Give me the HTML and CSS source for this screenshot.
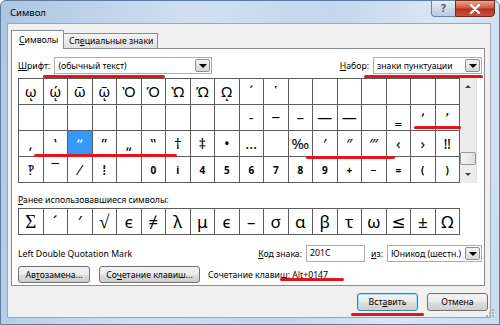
FILE: index.html
```html
<!DOCTYPE html>
<html lang="ru">
<head>
    <meta charset="UTF-8">
    <title>Символ</title>
    <link rel="stylesheet" href="styles.css">
</head>
<body>
    <div class="window">
        <div class="titlebar">
            <span class="title">Символ</span>
            <div class="caption-btns">
                <span class="cap-help">?</span>
                <span class="cap-close">
                    <svg width="12" height="10" viewBox="0 0 12 10"><path d="M2 1 L10 9 M10 1 L2 9" stroke="#fff" stroke-width="2.4" stroke-linecap="round"/></svg>
                </span>
            </div>
        </div>

        <div class="client">
            <div class="tabs">
                <span class="tab active"><u>С</u>имволы</span>
                <span class="tab">Сп<u>е</u>циальные знаки</span>
            </div>

            <div class="panel">
                <div class="font-row">
                    <label><u>Ш</u>рифт:</label>
                    <div class="combo font-combo"><span>(обычный текст)</span><span class="drop"></span></div>
                    <label class="set-label"><u>Н</u>абор:</label>
                    <div class="combo set-combo"><span>знаки пунктуации</span><span class="drop"></span></div>
                </div>

                <div class="grid-wrap">
                    <div class="grid chars">
                        <span>ῳ</span><span>ῴ</span><span>ῶ</span><span>ῷ</span><span>Ὸ</span><span>Ό</span><span>Ὼ</span><span>Ώ</span><span>ῼ</span><span>´</span><span>῾</span><span></span><span></span><span></span><span></span><span></span><span></span><span></span>
                        <span></span><span></span><span></span><span></span><span></span><span></span><span></span><span></span><span></span><span>‐</span><span>‒</span><span>–</span><span>—</span><span>―</span><span></span><span>‗</span><span>‘</span><span>’</span>
                        <span>‚</span><span>‛</span><span class="selected">“</span><span>”</span><span>„</span><span>‟</span><span>†</span><span>‡</span><span>•</span><span>…</span><span></span><span>‰</span><span>′</span><span>″</span><span>‴</span><span>‹</span><span>›</span><span>‼</span>
                        <span>‽</span><span>‾</span><span>⁄</span><span>⁞</span><span></span><span class="sup">0</span><span class="sup">i</span><span class="sup">4</span><span class="sup">5</span><span class="sup">6</span><span class="sup">7</span><span class="sup">8</span><span class="sup">9</span><span class="sup">+</span><span class="sup">−</span><span class="sup">=</span><span class="sup">(</span><span class="sup">)</span>
                    </div>
                    <div class="scrollbar">
                        <span class="sb-btn"><i class="arrow-up"></i></span>
                        <span class="sb-track"><span class="sb-thumb"></span></span>
                        <span class="sb-btn"><i class="arrow-down"></i></span>
                    </div>
                </div>

                <div class="recent-label"><u>Р</u>анее использовавшиеся символы:</div>
                <div class="grid recent">
                    <span class="serif">Σ</span><span>´</span><span>′</span><span class="serif">√</span><span>ϵ</span><span>≠</span><span>λ</span><span>μ</span><span>є</span><span>–</span><span>σ</span><span>α</span><span>β</span><span>τ</span><span>ω</span><span>≤</span><span>±</span><span>Ω</span>
                </div>

                <div class="info-row">
                    <span class="char-name">Left Double Quotation Mark</span>
                    <label><u>К</u>од знака:</label>
                    <div class="field">201C</div>
                    <label class="from-label"><u>и</u>з:</label>
                    <div class="combo from-combo"><span>Юникод (шестн.)</span><span class="drop"></span></div>
                </div>

                <div class="btn-row">
                    <button class="btn autocorrect">Ав<u>т</u>озамена...</button>
                    <button class="btn shortcut">Со<u>ч</u>етание клавиш...</button>
                    <span class="shortcut-text">Сочетание клавиш: Alt+0147</span>
                </div>
            </div>

            <div class="footer">
                <button class="btn default">Вст<u>а</u>вить</button>
                <button class="btn">Отмена</button>
            </div>
        </div>

        <svg class="grip" width="10" height="10" viewBox="0 0 10 10">
            <rect x="7" y="1" width="2" height="2" fill="#a7b4c4"/>
            <rect x="4" y="4" width="2" height="2" fill="#a7b4c4"/>
            <rect x="7" y="4" width="2" height="2" fill="#a7b4c4"/>
            <rect x="1" y="7" width="2" height="2" fill="#a7b4c4"/>
            <rect x="4" y="7" width="2" height="2" fill="#a7b4c4"/>
            <rect x="7" y="7" width="2" height="2" fill="#a7b4c4"/>
        </svg>

        <!-- red annotation strokes -->
        <span class="mark mark-font"></span>
        <span class="mark mark-set"></span>
        <span class="mark mark-quotes"></span>
        <span class="mark mark-single"></span>
        <span class="mark mark-primes"></span>
        <span class="mark mark-alt"></span>
        <span class="mark mark-insert"></span>
    </div>
</body>
</html>
```

FILE: styles.css
```css
* {
    margin: 0;
    padding: 0;
    box-sizing: border-box;
}

body {
    width: 500px;
    height: 325px;
    overflow: hidden;
    font-family: "Noto Sans", "DejaVu Sans", sans-serif;
    font-size: 8.7px;
    color: #000;
}

u {
    text-decoration: underline;
    text-underline-offset: 1px;
}

.window {
    position: relative;
    width: 500px;
    height: 325px;
    display: flex;
    flex-direction: column;
    border: 1px solid #5e7d9e;
    border-radius: 6px 6px 0 0;
    background: linear-gradient(100deg, #adc6e2 0%, #cfe0f2 35%, #c2d7ed 60%, #d8e7f6 80%, #c9dcf0 100%);
}

.titlebar {
    height: 22px;
    display: flex;
    justify-content: space-between;
    align-items: flex-start;
    padding-left: 9px;
}

.title {
    margin-top: 5px;
    font-size: 9.5px;
    color: #000;
}

.caption-btns {
    display: flex;
    margin-right: 4px;
    margin-top: -1px;
}

.cap-help {
    width: 24px;
    height: 17px;
    border: 1px solid #6a83a0;
    border-right: none;
    border-radius: 0 0 0 4px;
    background: linear-gradient(#e9f0f8, #cbdaea 50%, #b9cde3);
    color: #3d5572;
    font-size: 10px;
    font-weight: bold;
    text-align: center;
    line-height: 15px;
}

.cap-close {
    width: 40px;
    height: 17px;
    display: flex;
    align-items: center;
    justify-content: center;
    border: 1px solid #6e2b20;
    border-radius: 0 0 4px 0;
    background: linear-gradient(#e9a796, #d0583f 45%, #b8321b 55%, #c9523a);
}

.client {
    margin: 0 8px 0 6px;
    height: 295px;
    background: #f0f0f0;
    border: 1px solid #94a9c0;
    display: flex;
    flex-direction: column;
}

.tabs {
    display: flex;
    align-items: flex-end;
    height: 24px;
    padding-left: 3px;
}

.tab {
    width: 94px;
    height: 15px;
    padding: 0 0 0 5px;
    border: 1px solid #898c95;
    border-bottom: none;
    border-left: none;
    background: linear-gradient(#f3f3f3, #e1e1e1);
    line-height: 14px;
    white-space: nowrap;
}

.tab.active {
    width: 53px;
    height: 19px;
    margin-bottom: -1px;
    padding: 0 0 0 7px;
    border-left: 1px solid #898c95;
    background: #fff;
    line-height: 18px;
    position: relative;
}

.panel {
    margin: 0 5px 0 3px;
    height: 238px;
    border: 1px solid #898c95;
    background: #fff;
    padding: 8px 2px 0 6px;
}

.font-row {
    display: flex;
    align-items: center;
    height: 17px;
}

.combo {
    height: 17px;
    display: flex;
    align-items: center;
    justify-content: space-between;
    border: 1px solid #abadb3;
    background: #fff;
    padding: 0 1px 0 3px;
    white-space: nowrap;
}

.drop {
    width: 15px;
    height: 13px;
    border: 1px solid #8e8f8f;
    border-radius: 2px;
    background: linear-gradient(#f2f2f2, #d8d8d8);
    position: relative;
}

.drop::after {
    content: "";
    position: absolute;
    left: 3px;
    top: 4px;
    border-left: 4px solid transparent;
    border-right: 4px solid transparent;
    border-top: 4px solid #000;
}

.font-combo {
    width: 158px;
    margin-left: 4px;
}

.set-label {
    margin-left: auto;
    margin-right: 4px;
}

.set-combo {
    width: 109px;
}

.grid-wrap {
    display: flex;
    margin-top: 4px;
}

.grid {
    display: grid;
    grid-template-columns: repeat(18, 1fr);
    width: 442px;
    border-left: 1px solid #5c5c5c;
    border-top: 1px solid #5c5c5c;
}

.grid span {
    display: flex;
    align-items: center;
    justify-content: center;
    border-right: 1px solid #5c5c5c;
    border-bottom: 1px solid #5c5c5c;
    font-family: "Noto Sans", "DejaVu Sans", sans-serif;
    line-height: 1;
}

.chars {
    height: 105px;
    grid-auto-rows: 1fr;
}

.chars span {
    font-size: 15px;
}

.chars .selected {
    background: #3399ff;
    color: #fff;
}

.chars .sup {
    font-size: 10px;
    font-weight: bold;
}

.scrollbar {
    width: 17px;
    height: 105px;
    display: flex;
    flex-direction: column;
    background: #ececec;
    border-right: 1px solid #e2e2e2;
}

.sb-btn {
    height: 17px;
    display: flex;
    align-items: center;
    justify-content: center;
}

.arrow-up,
.arrow-down {
    border-left: 3px solid transparent;
    border-right: 3px solid transparent;
}

.arrow-up {
    border-bottom: 3px solid #444;
}

.arrow-down {
    border-top: 3px solid #444;
}

.sb-track {
    flex: 1;
    display: flex;
    flex-direction: column;
    justify-content: flex-end;
}

.sb-thumb {
    height: 13px;
    margin: 0 0 1px 0;
    border: 1px solid #979797;
    border-radius: 2px;
    background: linear-gradient(90deg, #f5f5f5, #dedede);
}

.recent-label {
    margin-top: 9px;
    height: 16px;
    line-height: 16px;
}

.recent {
    height: 27px;
}

.recent span {
    font-size: 17px;
}

.recent .serif {
    font-family: "Liberation Serif", "DejaVu Serif", serif;
    font-size: 19px;
}

.info-row {
    display: flex;
    align-items: center;
    margin-top: 10px;
    height: 17px;
}

.char-name {
    flex: 1;
}

.field {
    width: 59px;
    height: 17px;
    margin-left: 4px;
    padding-left: 3px;
    border: 1px solid #abadb3;
    line-height: 15px;
}

.from-label {
    margin-left: 6px;
    margin-right: 4px;
}

.from-combo {
    width: 95px;
}

.btn-row {
    display: flex;
    align-items: center;
    margin-top: 4px;
    height: 17px;
}

.btn {
    height: 17px;
    border: 1px solid #707070;
    border-radius: 3px;
    background: linear-gradient(#f2f2f2 0%, #ebebeb 50%, #dddddd 51%, #cfcfcf 100%);
    font-family: "Noto Sans", "DejaVu Sans", sans-serif;
    font-size: 8.7px;
    color: #000;
    line-height: 14px;
}

.autocorrect {
    width: 72px;
}

.shortcut {
    width: 101px;
    margin-left: 9px;
}

.shortcut-text {
    margin-left: 8px;
}

.footer {
    display: flex;
    justify-content: flex-end;
    gap: 9px;
    margin-top: 7px;
    padding-right: 2px;
}

.footer .btn {
    width: 61px;
    height: 18px;
}

.footer .default {
    border-color: #3c7fb1;
    box-shadow: inset 0 0 0 1px #a6e1fa;
}

.grip {
    position: absolute;
    right: 4px;
    bottom: 6px;
}

.mark {
    position: absolute;
    height: 3px;
    border-radius: 2px;
    background: #e3141c;
}

.mark-font {
    left: 42px;
    top: 74px;
    width: 122px;
}

.mark-set {
    left: 363px;
    top: 74px;
    width: 119px;
}

.mark-quotes {
    left: 33px;
    top: 153px;
    width: 143px;
}

.mark-single {
    left: 413px;
    top: 125px;
    width: 47px;
}

.mark-primes {
    left: 305px;
    top: 155px;
    width: 89px;
}

.mark-alt {
    left: 279px;
    top: 277px;
    width: 64px;
}

.mark-insert {
    left: 350px;
    top: 312px;
    width: 73px;
}
```
